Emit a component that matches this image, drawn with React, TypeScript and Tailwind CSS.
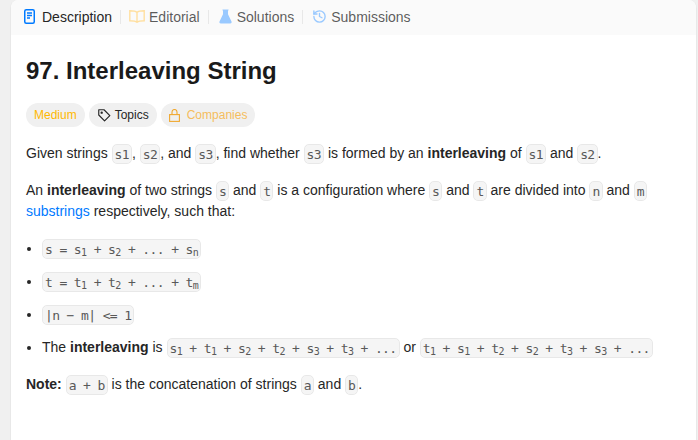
import React from "react";

const Code = ({ children }: { children: React.ReactNode }) => (
  <code className="rounded-[5px] border border-[#0000000d] bg-[#f5f5f5] px-0.5 py-[1.5px] font-['DejaVu_Sans_Mono',monospace] text-[13px] leading-4 tracking-[-0.62px] text-[#595959]">
    {children}
  </code>
);

const Sub = ({ children }: { children: React.ReactNode }) => (
  <sub className="text-[10px] leading-none">{children}</sub>
);

const Divider = () => <div className="mx-2 h-3.5 w-px bg-[#e8e8e8]" />;

const tabs = "flex items-center text-sm text-[#262626bf]";

export default function App() {
  return (
    <div className="h-[440px] w-[698px] overflow-hidden bg-[#f0f0f0] pl-[10px] font-['Liberation_Sans',sans-serif]">
      <div className="h-full w-[687px] overflow-hidden rounded-t-lg border-x border-[#e8e8e8] bg-white">
        {/* tab bar */}
        <div className="flex h-[35px] items-center bg-[#fafafa] pb-0.5 pl-[13px]">
          <div className="flex items-center gap-[7px] text-sm text-[#262626]">
            <svg width="11" height="15" viewBox="0 0 11 15" fill="none">
              <rect x="0.75" y="0.75" width="9.5" height="13.5" rx="1.5" stroke="#007aff" strokeWidth="1.5" />
              <path d="M3 4h5M3 6.5h5M3 9h3" stroke="#007aff" strokeWidth="1.3" />
            </svg>
            Description
          </div>
          <Divider />
          <div className={tabs}>
            <svg width="16" height="13" viewBox="0 0 16 13" fill="none" className="mr-1">
              <path d="M8 2.5C6.5 1 4 .8 .8 .8v10c3.2 0 5.700 .2 7.200 1.500 1.500-1.300 4-1.500 7.200-1.500v-10C12 .8 9.500 1 8 2.500zM8 2.500v9.800" stroke="#ffdf9f" strokeWidth="1.400" />
            </svg>
            Editorial
          </div>
          <Divider />
          <div className={tabs}>
            <svg width="13" height="15" viewBox="0 0 13 15" className="ml-0.5 mr-[5px]">
              <path d="M3.500 .5h6v1H9v3.800l3.500 7.200c.4 1-.2 2-1.300 2H1.800c-1.100 0-1.700-1-1.300-2L4 5.300V1.500h-.5z" fill="#99c9ff" />
            </svg>
            Solutions
          </div>
          <Divider />
          <div className={tabs}>
            <svg width="15" height="15" viewBox="0 0 24 24" fill="none" stroke="#99c9ff" strokeWidth="2.200" strokeLinecap="round" strokeLinejoin="round" className="ml-px mr-1">
              <path d="M3 12a9 9 0 1 0 9-9 9.750 9.750 0 0 0-6.740 2.740L3 8" />
              <path d="M3 3v5h5" />
              <path d="M12 7v5l4 2" />
            </svg>
            Submissions
          </div>
        </div>

        <div className="px-[15px] pt-5">
          <h1 className="text-2xl leading-8 font-bold text-[#1a1a1a]">97. Interleaving String</h1>

          {/* pills */}
          <div className="mt-4 flex gap-1 text-xs">
            <div className="flex h-6 items-center rounded-full bg-[#f0f0f0] px-2 text-[#ffb800]">Medium</div>
            <div className="flex h-6 items-center gap-1 rounded-full bg-[#f0f0f0] px-2 text-[#262626]">
              <svg width="14" height="14" viewBox="0 0 24 24" fill="none" stroke="#262626" strokeWidth="2" strokeLinejoin="round">
                <path d="M3 3h9l10 10-9 9L3 12z" />
                <circle cx="8" cy="8" r="1" fill="#262626" />
              </svg>
              Topics
            </div>
            <div className="flex h-6 items-center gap-[7px] rounded-full bg-[#f0f0f0] px-2 text-[#f5bd5c]">
              <svg width="11" height="13" viewBox="0 0 11 13" fill="none" stroke="#f0a830" strokeWidth="1.100">
                <rect x="0.600" y="5.600" width="9.800" height="6.800" />
                <path d="M3 5.500V3a2.500 2.500 0 0 1 5 0v2.500" />
              </svg>
              Companies
            </div>
          </div>

          {/* statement */}
          <div className="mt-4 text-sm leading-[21px] text-[#262626]">
            <p>
              Given strings <Code>s1</Code>, <Code>s2</Code>, and <Code>s3</Code>, find whether <Code>s3</Code> is formed by an <strong>interleaving</strong> of <Code>s1</Code> and <Code>s2</Code>.
            </p>
            <p className="mt-4">
              An <strong>interleaving</strong> of two strings <Code>s</Code> and <Code>t</Code> is a configuration where <Code>s</Code> and <Code>t</Code> are divided into <Code>n</Code> and <Code>m</Code>{" "}
              <span className="text-[#007aff]">substrings</span> respectively, such that:
            </p>
            <ul className="mt-4 flex list-disc flex-col gap-3 pl-4">
              <li>
                <Code>s = s<Sub>1</Sub> + s<Sub>2</Sub> + ... + s<Sub>n</Sub></Code>
              </li>
              <li>
                <Code>t = t<Sub>1</Sub> + t<Sub>2</Sub> + ... + t<Sub>m</Sub></Code>
              </li>
              <li>
                <Code>|n − m| &lt;= 1</Code>
              </li>
              <li>
                The <strong>interleaving</strong> is <Code>s<Sub>1</Sub> + t<Sub>1</Sub> + s<Sub>2</Sub> + t<Sub>2</Sub> + s<Sub>3</Sub> + t<Sub>3</Sub> + ...</Code> or <Code>t<Sub>1</Sub> + s<Sub>1</Sub> + t<Sub>2</Sub> + s<Sub>2</Sub> + t<Sub>3</Sub> + s<Sub>3</Sub> + ...</Code>
              </li>
            </ul>
            <p className="mt-4">
              <strong>Note:</strong> <Code>a + b</Code> is the concatenation of strings <Code>a</Code> and <Code>b</Code>.
            </p>
          </div>
        </div>
      </div>
    </div>
  );
}
